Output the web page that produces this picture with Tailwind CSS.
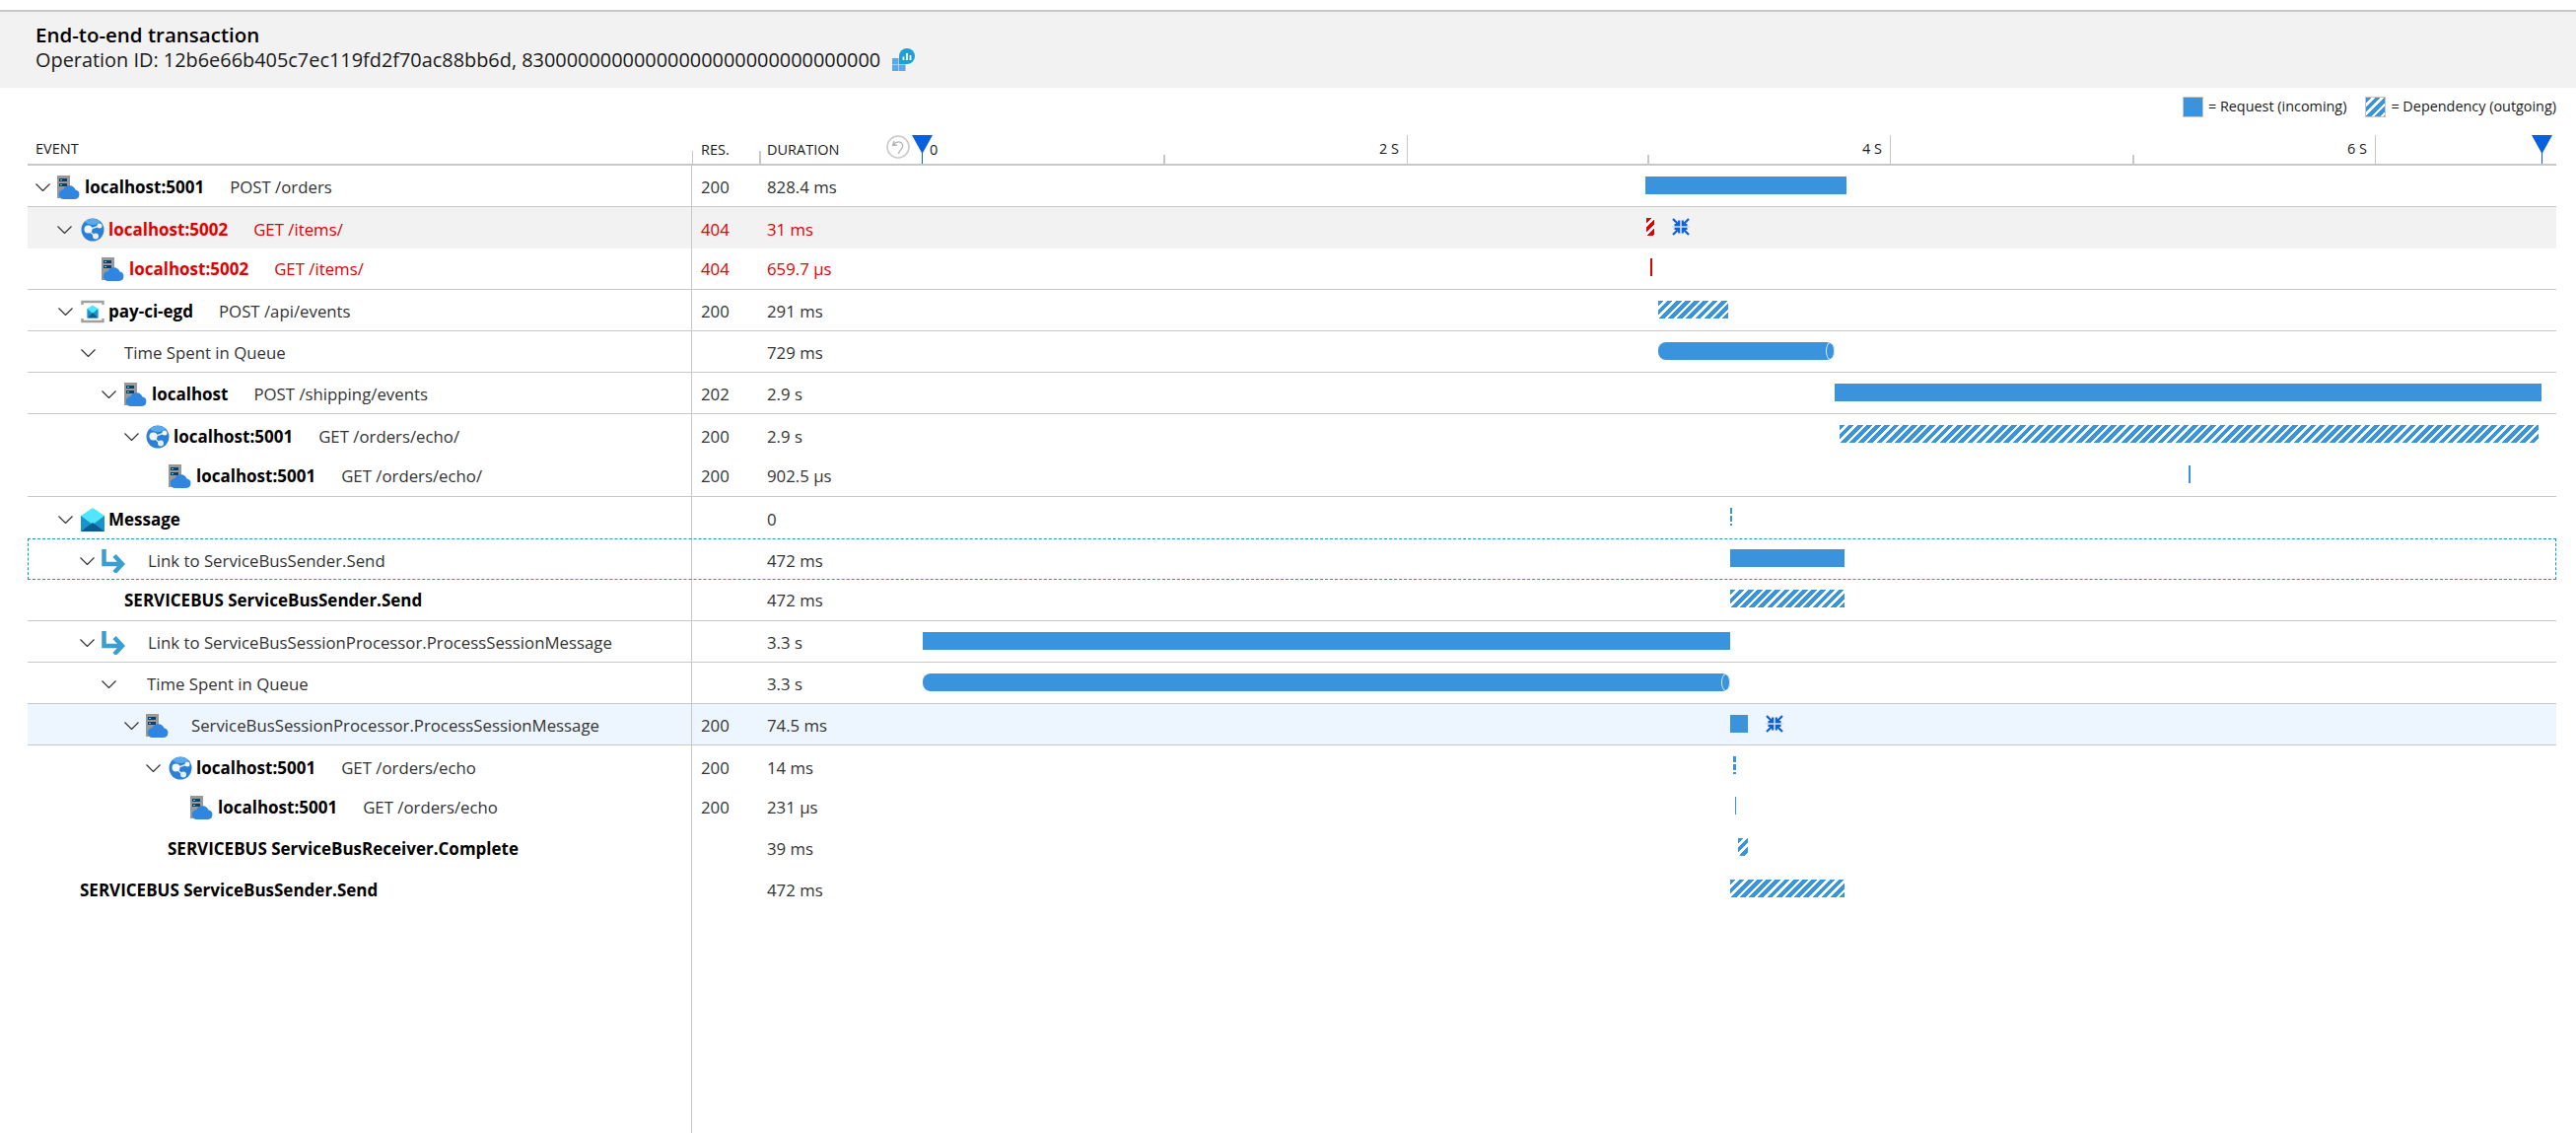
<!DOCTYPE html>
<html lang="en">
  <head>
    <meta charset="UTF-8" />
    <title>End-to-end transaction</title>
    <script src="https://cdn.jsdelivr.net/npm/@tailwindcss/browser@4"></script>
  </head>
  <body class="h-screen overflow-hidden bg-white font-['Open_Sans',sans-serif] text-[16.8px] text-[#333]">
    <!-- shared icons -->
    <svg class="hidden">
      <symbol id="chevron" viewBox="0 0 15 8">
        <path d="M0.5 0.5 L7.5 7.5 L14.5 0.5" fill="none" stroke="#333" stroke-width="1.2" />
      </symbol>
      <symbol id="server" viewBox="0 0 23 24">
        <rect x="0" y="0" width="13" height="23" fill="#999" />
        <rect x="2" y="3" width="8" height="3" fill="#0d3f66" />
        <rect x="3" y="4" width="2" height="1" fill="#5fd0f5" />
        <rect x="2" y="8" width="8" height="3" fill="#0d3f66" />
        <rect x="3" y="9" width="2" height="1" fill="#5fd0f5" />
        <path d="M7 24 a5 5 0 0 1 -0.500 -10 a6.500 6.500 0 0 1 12 0.500 a4.800 4.800 0 0 1 -0.500 9.500 Z" fill="#2f86e0" />
      </symbol>
      <symbol id="globe" viewBox="0 0 24 24">
        <circle cx="12" cy="12" r="11.5" fill="#2b7fd6" />
        <path d="M4 4 A11.500 11.500 0 0 1 20 4 C15 8 9 8 4 4 Z" fill="#5aaaee" />
        <path d="M7 12 L19 8 M7 12 L15 19" stroke="#d4e8fa" stroke-width="1.500" />
        <circle cx="7.500" cy="11.500" r="4" fill="#f2f7fc" />
        <circle cx="19" cy="8" r="2.500" fill="#f2f7fc" />
        <circle cx="15" cy="18.500" r="3" fill="#e4eff9" />
      </symbol>
      <symbol id="envelope" viewBox="0 0 24 24">
        <path d="M0 8 L12 0 L24 8 L24 24 L0 24 Z" fill="#50e6ff" />
        <path d="M0 8 L12 17 L0 24 Z" fill="#1b93c9" />
        <path d="M24 8 L12 17 L24 24 Z" fill="#1b93c9" />
        <path d="M0 24 L12 15 L24 24 Z" fill="#0a5a94" />
      </symbol>
      <symbol id="container" viewBox="0 0 24 24">
        <path d="M1.500 5 V2 H22.500 V5 M1.500 19 V22 H22.500 V19" fill="none" stroke="#a0a0a0" stroke-width="2.400" />
        <path d="M6.500 9 L12 5.500 L17.500 9 V18.500 H6.500 Z" fill="#50e6ff" />
        <path d="M6.500 9 L12 14 L6.500 18.500 Z M17.500 9 L12 14 L17.500 18.500 Z" fill="#1b93c9" />
        <path d="M6.500 18.500 L12 13 L17.500 18.500 Z" fill="#0a5a94" />
      </symbol>
      <symbol id="link" viewBox="0 0 24 24">
        <path d="M2.500 0 V15 H20 M13 6.500 L21 15 L13 23.500" fill="none" stroke="#3a9fd0" stroke-width="4.500" />
      </symbol>
      <symbol id="collapse" viewBox="0 0 18 18">
        <path d="M0 9 H18" stroke="#b9d3f5" stroke-width="1" />
        <g fill="none" stroke="#0a5fdc" stroke-width="2.200">
          <path d="M1 1 L7 7 M7.200 2.500 V7.200 H2.500" />
          <path d="M17 1 L11 7 M10.800 2.500 V7.200 H15.500" />
          <path d="M1 17 L7 11 M7.200 15.500 V10.800 H2.500" />
          <path d="M17 17 L11 11 M10.800 15.500 V10.800 H15.500" />
        </g>
      </symbol>
      <symbol id="marker" viewBox="0 0 21 29">
        <path d="M0 0 H21 L11 18 V29 H10 V18 Z" fill="#0a5fdc" />
      </symbol>
    </svg>

    <div class="flex h-full flex-col pt-[10px]">
      <div class="flex h-[79px] shrink-0 flex-col justify-center border-t-2 border-[#c8c8c8] bg-[#f2f2f2] pb-[6px] pl-[36px] text-[#1a1a1a]">
        <div class="text-[20.5px] leading-[25px] font-semibold text-black">End-to-end transaction</div>
        <div class="flex items-center text-[19.9px] leading-[25px]">
          Operation ID: 12b6e66b405c7ec119fd2f70ac88bb6d, 83000000000000000000000000000000
          <svg class="ml-[12px] h-[23px] w-[23px]" viewBox="0 0 23 23">
            <path d="M0 10 H6.500 V16 H0 Z M7 10 H13.500 V16 H7 Z M0 16.500 H6.500 V23 H0 Z M7 16.500 H13.500 V23 H7 Z" fill="#5aa9e6" />
            <path d="M7 16 V8 A8 8 0 1 1 15 16 Z" fill="#1fa0d0" />
            <path d="M11.500 12 V8.500 M15 12 V5 M18.500 12 V7" stroke="#fff" stroke-width="1.800" />
          </svg>
        </div>
      </div>

      <div class="flex h-[33px] shrink-0 items-center justify-end pt-[5px] pr-[20px] text-[14.4px] text-[#1a1a1a]">
        <span class="mr-[5px] h-[21px] w-[21px] border border-[#c8c8c8] bg-[#3993dd]"></span>
        <span class="mr-[19px]">= Request (incoming)</span>
        <span class="mr-[5px] h-[21px] w-[21px] border border-[#c8c8c8] bg-[repeating-linear-gradient(135deg,#3993dd_0,#3993dd_4px,#fff_4px,#fff_6.5px)]"></span>
        <span>= Dependency (outgoing)</span>
      </div>

      <div class="mr-[20px] ml-[28px] flex h-[46px] shrink-0 items-end border-b-2 border-[#c8c8c8] text-[14.5px] text-[#1a1a1a]">
        <div class="flex w-[674px] pb-[4px] pl-[8px]">EVENT</div>
        <div class="h-[13px] w-[68px] border-l border-[#c8c8c8]"><div class="-mt-[12px] pl-[8px]">RES.</div></div>
        <div class="relative h-[13px] w-[166px] border-l-2 border-[#c8c8c8]">
          <div class="-mt-[12px] pl-[6px]">DURATION</div>
          <svg class="absolute top-[-16px] left-[127px] h-[24px] w-[24px]" viewBox="0 0 24 24">
            <circle cx="12" cy="12" r="11" fill="none" stroke="#c8c8c8" stroke-width="1.500" />
            <path d="M8 6 L6.500 10.500 L11 10 M7 10 C12 4 19 8 16 13 C15 15 13 16 12.500 19" fill="none" stroke="#b4b4b4" stroke-width="1.300" />
          </svg>
        </div>
        <div class="relative flex flex-1 items-end">
          <svg class="absolute bottom-0 left-[-11px] h-[29px] w-[21px]"><use href="#marker" /></svg>
          <span class="absolute bottom-[3px] left-[7px]">0</span>
          <svg class="absolute bottom-0 left-[1632px] h-[29px] w-[21px]"><use href="#marker" /></svg>
          <div class="h-[9px] w-[246px] border-r-2 border-[#c8c8c8]"></div>
          <div class="h-[29px] w-[246px] border-r border-[#c8c8c8] pt-[3px] pr-[8px] text-right">2 S</div>
          <div class="h-[9px] w-[245px] border-r-2 border-[#c8c8c8]"></div>
          <div class="h-[29px] w-[245px] border-r border-[#c8c8c8] pt-[3px] pr-[8px] text-right">4 S</div>
          <div class="h-[9px] w-[247px] border-r-2 border-[#c8c8c8]"></div>
          <div class="h-[29px] w-[245px] border-r border-[#c8c8c8] pt-[3px] pr-[8px] text-right">6 S</div>
        </div>
      </div>

      <div class="mr-[20px] ml-[28px] flex h-[42px] shrink-0 items-center border-b border-[#c8c8c8]">
        <div class="flex h-full w-[674px] items-center border-r border-[#c8c8c8] pt-[3px] pl-[8px]">
          <svg class="h-[8px] w-[15px]"><use href="#chevron" /></svg>
          <svg class="ml-[7px] h-[24px] w-[23px]"><use href="#server" /></svg>
          <span class="ml-[5px] text-[17px] font-bold text-black">localhost:5001</span><span class="ml-[26px]">POST /orders</span>
        </div>
        <div class="w-[68px] pt-[3px] pl-[9px]">200</div><div class="w-[166px] pt-[3px] pl-[8px]">828.4 ms</div>
        <div class="flex h-full flex-1 items-start pt-[11px]"><div class="ml-[733px] h-[18px] w-[204px] bg-[#3993dd]"></div></div>
      </div>

      <div class="mr-[20px] ml-[28px] flex h-[42px] shrink-0 items-center bg-[#f2f2f2] text-[#e00000]">
        <div class="flex h-full w-[674px] items-center border-r border-[#c8c8c8] pt-[3px] pl-[30px]">
          <svg class="h-[8px] w-[15px]"><use href="#chevron" /></svg>
          <svg class="ml-[9px] h-[24px] w-[24px]"><use href="#globe" /></svg>
          <span class="ml-[4px] text-[17px] font-bold">localhost:5002</span><span class="ml-[26px]">GET /items/</span>
        </div>
        <div class="w-[68px] pt-[3px] pl-[9px]">404</div><div class="w-[166px] pt-[3px] pl-[8px]">31 ms</div>
        <div class="flex h-full flex-1 items-start pt-[11px]">
          <div class="ml-[734px] h-[18px] w-[8px] bg-[repeating-linear-gradient(135deg,#e00000_0,#e00000_4px,#fff_4px,#fff_6.5px)]"></div>
          <svg class="ml-[18px] h-[18px] w-[18px]"><use href="#collapse" /></svg>
        </div>
      </div>

      <div class="mr-[20px] ml-[28px] flex h-[42px] shrink-0 items-center border-b border-[#c8c8c8] text-[#e00000]">
        <div class="flex h-full w-[674px] items-center border-r border-[#c8c8c8] pl-[75px]">
          <svg class="h-[24px] w-[23px]"><use href="#server" /></svg>
          <span class="ml-[5px] text-[17px] font-bold">localhost:5002</span><span class="ml-[26px]">GET /items/</span>
        </div>
        <div class="w-[68px] pl-[9px]">404</div><div class="w-[166px] pl-[8px]">659.7 µs</div>
        <div class="flex h-full flex-1 items-start pt-[10px]"><div class="ml-[738px] h-[18px] w-[2px] bg-[#e00000]"></div></div>
      </div>

      <div class="mr-[20px] ml-[28px] flex h-[42px] shrink-0 items-center border-b border-[#c8c8c8]">
        <div class="flex h-full w-[674px] items-center border-r border-[#c8c8c8] pt-[3px] pl-[31px]">
          <svg class="h-[8px] w-[15px]"><use href="#chevron" /></svg>
          <svg class="ml-[8px] h-[24px] w-[24px]"><use href="#container" /></svg>
          <span class="ml-[4px] text-[17px] font-bold text-black">pay-ci-egd</span><span class="ml-[26px]">POST /api/events</span>
        </div>
        <div class="w-[68px] pt-[3px] pl-[9px]">200</div><div class="w-[166px] pt-[3px] pl-[8px]">291 ms</div>
        <div class="flex h-full flex-1 items-start pt-[11px]"><div class="ml-[746px] h-[18px] w-[71px] bg-[repeating-linear-gradient(135deg,#3993dd_0,#3993dd_4px,#fff_4px,#fff_6.5px)]"></div></div>
      </div>

      <div class="mr-[20px] ml-[28px] flex h-[42px] shrink-0 items-center border-b border-[#c8c8c8]">
        <div class="flex h-full w-[674px] items-center border-r border-[#c8c8c8] pt-[3px] pl-[54px]">
          <svg class="h-[8px] w-[15px]"><use href="#chevron" /></svg>
          <span class="ml-[29px]">Time Spent in Queue</span>
        </div>
        <div class="w-[68px] pt-[3px] pl-[9px]"></div><div class="w-[166px] pt-[3px] pl-[8px]">729 ms</div>
        <div class="flex h-full flex-1 items-start pt-[11px]">
          <div class="ml-[746px] flex h-[18px] w-[179px] justify-end rounded-[8px] bg-[#3993dd]"><span class="h-[18px] w-[9px] rounded-[50%] border border-white/80"></span></div>
        </div>
      </div>

      <div class="mr-[20px] ml-[28px] flex h-[42px] shrink-0 items-center border-b border-[#c8c8c8]">
        <div class="flex h-full w-[674px] items-center border-r border-[#c8c8c8] pt-[3px] pl-[75px]">
          <svg class="h-[8px] w-[15px]"><use href="#chevron" /></svg>
          <svg class="ml-[8px] h-[24px] w-[23px]"><use href="#server" /></svg>
          <span class="ml-[5px] text-[17px] font-bold text-black">localhost</span><span class="ml-[26px]">POST /shipping/events</span>
        </div>
        <div class="w-[68px] pt-[3px] pl-[9px]">202</div><div class="w-[166px] pt-[3px] pl-[8px]">2.9 s</div>
        <div class="flex h-full flex-1 items-start pt-[11px]"><div class="ml-[925px] h-[18px] w-[717px] bg-[#3993dd]"></div></div>
      </div>

      <div class="mr-[20px] ml-[28px] flex h-[42px] shrink-0 items-center">
        <div class="flex h-full w-[674px] items-center border-r border-[#c8c8c8] pt-[3px] pl-[98px]">
          <svg class="h-[8px] w-[15px]"><use href="#chevron" /></svg>
          <svg class="ml-[7px] h-[24px] w-[24px]"><use href="#globe" /></svg>
          <span class="ml-[4px] text-[17px] font-bold text-black">localhost:5001</span><span class="ml-[26px]">GET /orders/echo/</span>
        </div>
        <div class="w-[68px] pt-[3px] pl-[9px]">200</div><div class="w-[166px] pt-[3px] pl-[8px]">2.9 s</div>
        <div class="flex h-full flex-1 items-start pt-[11px]"><div class="ml-[930px] h-[18px] w-[709px] bg-[repeating-linear-gradient(135deg,#3993dd_0,#3993dd_4px,#fff_4px,#fff_6.5px)]"></div></div>
      </div>

      <div class="mr-[20px] ml-[28px] flex h-[42px] shrink-0 items-center border-b border-[#c8c8c8]">
        <div class="flex h-full w-[674px] items-center border-r border-[#c8c8c8] pl-[143px]">
          <svg class="h-[24px] w-[23px]"><use href="#server" /></svg>
          <span class="ml-[5px] text-[17px] font-bold text-black">localhost:5001</span><span class="ml-[26px]">GET /orders/echo/</span>
        </div>
        <div class="w-[68px] pl-[9px]">200</div><div class="w-[166px] pl-[8px]">902.5 µs</div>
        <div class="flex h-full flex-1 items-start pt-[10px]"><div class="ml-[1284px] h-[18px] w-[2px] bg-[#3993dd]"></div></div>
      </div>

      <div class="mr-[20px] ml-[28px] flex h-[42px] shrink-0 items-center">
        <div class="flex h-full w-[674px] items-center border-r border-[#c8c8c8] pt-[3px] pl-[31px]">
          <svg class="h-[8px] w-[15px]"><use href="#chevron" /></svg>
          <svg class="ml-[8px] h-[24px] w-[24px]"><use href="#envelope" /></svg>
          <span class="ml-[4px] text-[17px] font-bold text-black">Message</span>
        </div>
        <div class="w-[68px] pt-[3px] pl-[9px]"></div><div class="w-[166px] pt-[3px] pl-[8px]">0</div>
        <div class="flex h-full flex-1 items-start pt-[11px]"><div class="ml-[819px] h-[18px] w-[2px] bg-[repeating-linear-gradient(180deg,#3993dd_0,#3993dd_6px,#fff_6px,#fff_8px)]"></div></div>
      </div>

      <div class="mr-[20px] ml-[28px] flex h-[42px] shrink-0 items-center outline-1 -outline-offset-1 outline-[#0e9ccb] outline-dashed">
        <div class="flex h-full w-[674px] items-center border-r border-[#c8c8c8] pt-[3px] pl-[53px]">
          <svg class="h-[8px] w-[15px]"><use href="#chevron" /></svg>
          <svg class="ml-[7px] h-[24px] w-[24px]"><use href="#link" /></svg>
          <span class="ml-[23px]">Link to ServiceBusSender.Send</span>
        </div>
        <div class="w-[68px] pt-[3px] pl-[9px]"></div><div class="w-[166px] pt-[3px] pl-[8px]">472 ms</div>
        <div class="flex h-full flex-1 items-start pt-[11px]"><div class="ml-[819px] h-[18px] w-[116px] bg-[#3993dd]"></div></div>
      </div>

      <div class="mr-[20px] ml-[28px] flex h-[42px] shrink-0 items-center border-b border-[#c8c8c8]">
        <div class="flex h-full w-[674px] items-center border-r border-[#c8c8c8] pl-[98px]">
          <span class="text-[17px] font-bold text-black">SERVICEBUS ServiceBusSender.Send</span>
        </div>
        <div class="w-[68px] pl-[9px]"></div><div class="w-[166px] pl-[8px]">472 ms</div>
        <div class="flex h-full flex-1 items-start pt-[10px]"><div class="ml-[819px] h-[18px] w-[116px] bg-[repeating-linear-gradient(135deg,#3993dd_0,#3993dd_4px,#fff_4px,#fff_6.5px)]"></div></div>
      </div>

      <div class="mr-[20px] ml-[28px] flex h-[42px] shrink-0 items-center border-b border-[#c8c8c8]">
        <div class="flex h-full w-[674px] items-center border-r border-[#c8c8c8] pt-[3px] pl-[53px]">
          <svg class="h-[8px] w-[15px]"><use href="#chevron" /></svg>
          <svg class="ml-[7px] h-[24px] w-[24px]"><use href="#link" /></svg>
          <span class="ml-[23px]">Link to ServiceBusSessionProcessor.ProcessSessionMessage</span>
        </div>
        <div class="w-[68px] pt-[3px] pl-[9px]"></div><div class="w-[166px] pt-[3px] pl-[8px]">3.3 s</div>
        <div class="flex h-full flex-1 items-start pt-[11px]"><div class="h-[18px] w-[819px] bg-[#3993dd]"></div></div>
      </div>

      <div class="mr-[20px] ml-[28px] flex h-[42px] shrink-0 items-center border-b border-[#c8c8c8]">
        <div class="flex h-full w-[674px] items-center border-r border-[#c8c8c8] pt-[3px] pl-[75px]">
          <svg class="h-[8px] w-[15px]"><use href="#chevron" /></svg>
          <span class="ml-[31px]">Time Spent in Queue</span>
        </div>
        <div class="w-[68px] pt-[3px] pl-[9px]"></div><div class="w-[166px] pt-[3px] pl-[8px]">3.3 s</div>
        <div class="flex h-full flex-1 items-start pt-[11px]">
          <div class="flex h-[18px] w-[819px] justify-end rounded-[8px] bg-[#3993dd]"><span class="h-[18px] w-[9px] rounded-[50%] border border-white/80"></span></div>
        </div>
      </div>

      <div class="mr-[20px] ml-[28px] flex h-[42px] shrink-0 items-center border-b border-[#c8c8c8] bg-[#edf5fe]">
        <div class="flex h-full w-[674px] items-center border-r border-[#c8c8c8] pt-[3px] pl-[98px]">
          <svg class="h-[8px] w-[15px]"><use href="#chevron" /></svg>
          <svg class="ml-[7px] h-[24px] w-[23px]"><use href="#server" /></svg>
          <span class="ml-[23px]">ServiceBusSessionProcessor.ProcessSessionMessage</span>
        </div>
        <div class="w-[68px] pt-[3px] pl-[9px]">200</div><div class="w-[166px] pt-[3px] pl-[8px]">74.5 ms</div>
        <div class="flex h-full flex-1 items-start pt-[11px]">
          <div class="ml-[819px] h-[18px] w-[18px] bg-[#3993dd]"></div>
          <svg class="ml-[18px] h-[18px] w-[18px]"><use href="#collapse" /></svg>
        </div>
      </div>

      <div class="mr-[20px] ml-[28px] flex h-[42px] shrink-0 items-center">
        <div class="flex h-full w-[674px] items-center border-r border-[#c8c8c8] pt-[3px] pl-[120px]">
          <svg class="h-[8px] w-[15px]"><use href="#chevron" /></svg>
          <svg class="ml-[8px] h-[24px] w-[24px]"><use href="#globe" /></svg>
          <span class="ml-[4px] text-[17px] font-bold text-black">localhost:5001</span><span class="ml-[26px]">GET /orders/echo</span>
        </div>
        <div class="w-[68px] pt-[3px] pl-[9px]">200</div><div class="w-[166px] pt-[3px] pl-[8px]">14 ms</div>
        <div class="flex h-full flex-1 items-start pt-[11px]"><div class="ml-[822px] h-[18px] w-[3px] bg-[repeating-linear-gradient(180deg,#3993dd_0,#3993dd_6px,#fff_6px,#fff_8px)]"></div></div>
      </div>

      <div class="mr-[20px] ml-[28px] flex h-[42px] shrink-0 items-center">
        <div class="flex h-full w-[674px] items-center border-r border-[#c8c8c8] pl-[165px]">
          <svg class="h-[24px] w-[23px]"><use href="#server" /></svg>
          <span class="ml-[5px] text-[17px] font-bold text-black">localhost:5001</span><span class="ml-[26px]">GET /orders/echo</span>
        </div>
        <div class="w-[68px] pl-[9px]">200</div><div class="w-[166px] pl-[8px]">231 µs</div>
        <div class="flex h-full flex-1 items-start pt-[10px]"><div class="ml-[824px] h-[18px] w-[1px] bg-[#3993dd]"></div></div>
      </div>

      <div class="mr-[20px] ml-[28px] flex h-[42px] shrink-0 items-center">
        <div class="flex h-full w-[674px] items-center border-r border-[#c8c8c8] pl-[142px]">
          <span class="text-[17px] font-bold text-black">SERVICEBUS ServiceBusReceiver.Complete</span>
        </div>
        <div class="w-[68px] pl-[9px]"></div><div class="w-[166px] pl-[8px]">39 ms</div>
        <div class="flex h-full flex-1 items-start pt-[10px]"><div class="ml-[827px] h-[18px] w-[10px] rounded-b-[4px] bg-[repeating-linear-gradient(135deg,#3993dd_0,#3993dd_4px,#fff_4px,#fff_6.5px)]"></div></div>
      </div>

      <div class="mr-[20px] ml-[28px] flex h-[42px] shrink-0 items-center">
        <div class="flex h-full w-[674px] items-center border-r border-[#c8c8c8] pl-[53px]">
          <span class="text-[17px] font-bold text-black">SERVICEBUS ServiceBusSender.Send</span>
        </div>
        <div class="w-[68px] pl-[9px]"></div><div class="w-[166px] pl-[8px]">472 ms</div>
        <div class="flex h-full flex-1 items-start pt-[10px]"><div class="ml-[819px] h-[18px] w-[116px] bg-[repeating-linear-gradient(135deg,#3993dd_0,#3993dd_4px,#fff_4px,#fff_6.5px)]"></div></div>
      </div>

      <div class="ml-[28px] w-[674px] flex-1 border-r border-[#c8c8c8]"></div>
    </div>
  </body>
</html>
